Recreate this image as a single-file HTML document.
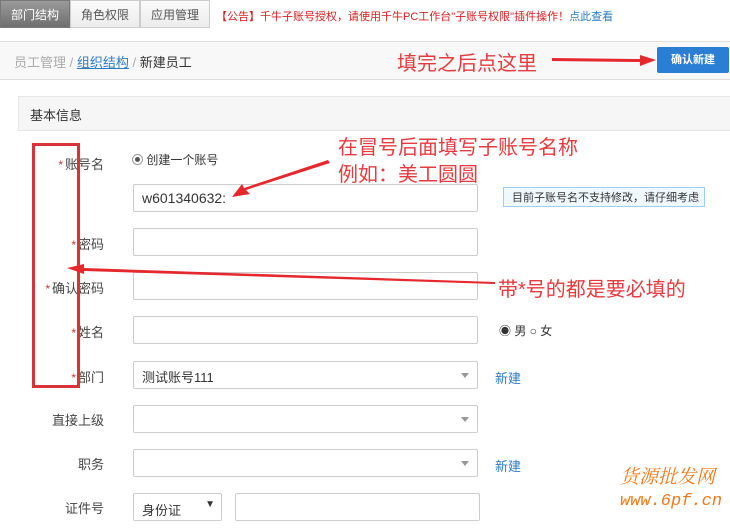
<!DOCTYPE html>
<html><head><meta charset="utf-8"><style>
body{margin:0;width:730px;height:528px;background:#fff;position:relative;overflow:hidden;font-family:"Liberation Sans","Noto Sans CJK SC",sans-serif;font-size:13px;color:#333}
.a{position:absolute;white-space:nowrap}
.tab{position:absolute;top:0;height:28px;width:70px;line-height:28px;text-align:center;font-size:12px;color:#555;background:linear-gradient(#fafafa,#ececec);border:1px solid #ccc;box-sizing:border-box}
.inp{position:absolute;left:133px;width:345px;height:28px;border:1px solid #ccc;box-sizing:border-box;background:#fff;border-radius:2px}
.lbl{position:absolute;right:626px;font-size:13px;color:#444;white-space:nowrap}
.st{color:#c33;font-size:12px;margin-right:2px}
.car{position:absolute;right:8px;top:11px;width:0;height:0;border-left:4px solid transparent;border-right:4px solid transparent;border-top:5px solid #999}
.ann{position:absolute;color:#e53a3e;font-size:20px;white-space:nowrap}
.lnk{position:absolute;color:#2a7bc3;font-size:13px}
</style></head><body>
<div class="tab" style="left:0;background:linear-gradient(#9a9a9a,#6f6f6f);color:#fff;border-color:#777">部门结构</div>
<div class="tab" style="left:70px">角色权限</div>
<div class="tab" style="left:140px">应用管理</div>
<div class="a" style="left:216px;top:8px;font-size:11px;color:#d42020">【公告】千牛子账号授权，请使用千牛PC工作台"子账号权限"插件操作！<span style="color:#2a7bc3">点此查看</span></div>
<div class="a" style="left:0;top:41px;width:730px;height:37px;background:#f8f8f8;border-top:1px solid #ddd;border-bottom:1px solid #ddd"></div>
<div class="a" style="left:14px;top:52px;font-size:13px;color:#aaa">员工管理 / <span style="color:#2a7bc3;text-decoration:underline">组织结构</span> / <span style="color:#333">新建员工</span></div>
<div class="a" style="left:657px;top:47px;width:72px;height:26px;background:#2a7fd4;color:#fff;font-size:11px;font-weight:bold;line-height:26px;text-align:center;border-radius:2px">确认新建</div>
<div class="a" style="left:18px;top:96px;width:712px;height:33px;background:#f6f6f6;border:1px solid #e6e6e6;border-right:none"></div>
<div class="a" style="left:30px;top:105px;font-size:13px">基本信息</div>

<div class="lbl" style="top:154px"><span class="st">*</span>账号名</div>
<div class="a" style="left:132px;top:151px;font-size:12px"><span style="display:inline-block;width:9px;height:9px;border:1px solid #999;border-radius:50%;vertical-align:-1px;position:relative;background:#fff"><span style="position:absolute;left:2px;top:2px;width:5px;height:5px;border-radius:50%;background:#555"></span></span> 创建一个账号</div>
<div class="inp" style="top:184px"><span class="a" style="left:8px;top:5px;font-size:14px">w601340632:</span></div>
<div class="a" style="left:503px;top:187px;width:202px;height:20px;border:1px solid #9cd0ee;background:#eef8fd;font-size:11px;line-height:20px;padding-left:8px;box-sizing:border-box">目前子账号名不支持修改，请仔细考虑</div>
<div class="lbl" style="top:234px"><span class="st">*</span>密码</div>
<div class="inp" style="top:228px"></div>
<div class="lbl" style="top:278px"><span class="st">*</span>确认密码</div>
<div class="inp" style="top:272px"></div>
<div class="lbl" style="top:322px"><span class="st">*</span>姓名</div>
<div class="inp" style="top:316px"></div>
<div class="a" style="left:499px;top:322px;font-size:12px">◉ 男 ○ 女</div>
<div class="lbl" style="top:367px"><span class="st">*</span>部门</div>
<div class="inp" style="top:361px"><span class="a" style="left:8px;top:5px">测试账号111</span><span class="car"></span></div>
<div class="lnk" style="left:495px;top:368px">新建</div>
<div class="lbl" style="top:410px">直接上级</div>
<div class="inp" style="top:405px"><span class="car"></span></div>
<div class="lbl" style="top:454px">职务</div>
<div class="inp" style="top:449px"><span class="car"></span></div>
<div class="lnk" style="left:495px;top:456px">新建</div>
<div class="lbl" style="top:498px">证件号</div>
<div class="inp" style="top:493px;width:89px"><span class="a" style="left:8px;top:6px">身份证</span><span class="a" style="right:6px;top:5px;font-size:10px">▼</span></div>
<div class="inp" style="top:493px;left:235px;width:245px"></div>

<div class="a" style="left:32px;top:143px;width:42px;height:239px;border:3px solid #d9333a"></div>
<div class="ann" style="left:397px;top:47px">填完之后点这里</div>
<div class="ann" style="left:338px;top:131px">在冒号后面填写子账号名称</div>
<div class="ann" style="left:338px;top:158px">例如：美工圆圆</div>
<div class="ann" style="left:498px;top:273px">带*号的都是要必填的</div>
<svg class="a" style="left:0;top:0" width="730" height="528">
<g fill="#e5282e">
<path d="M552 58 L640 59 L640 55 L656 60 L640 66 L640 62 L552 61Z"/>
<path d="M330 163 L246 190 L250 194 L232 197 L242 184 L244 188 L328 160Z"/>
<path d="M495 282 L84 268 L84 264 L67 268 L84 274 L84 271 L495 284Z"/>
</g>
</svg>
<div class="a" style="left:620px;top:462px;font-size:19px;color:#f07a1a;font-family:'Liberation Serif','Noto Serif CJK SC',serif;font-style:italic">货源批发网</div>
<div class="a" style="left:620px;top:492px;font-size:17px;color:#f07a1a;font-family:'Liberation Mono',monospace;font-style:italic">www.6pf.cn</div>
</body></html>
